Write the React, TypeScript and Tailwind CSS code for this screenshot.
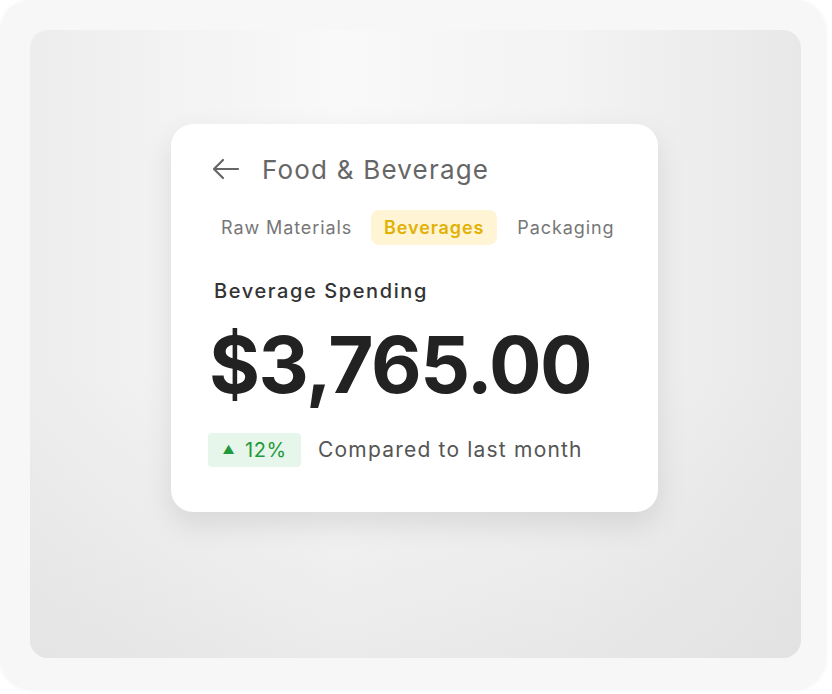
import React from "react";

export default function App() {
  return (
    <div className="w-[832px] h-[694px] bg-white" style={{ fontFamily: "Inter, 'Noto Sans', sans-serif" }}>
      <div className="w-[826px] h-[690px] rounded-[32px] bg-[#f7f7f7] shadow-[0_0_4px_rgba(0,0,0,0.06)] pt-[30px] pl-[30px]">
        <div className="w-[771px] h-[628px] rounded-[18px] bg-[linear-gradient(90deg,#ededed_0%,#f9f9f9_40%,#f3f3f3_70%,#e8e8e8_100%)] flex flex-col items-start pt-[94px] pl-[141px] relative overflow-hidden">
          <div className="absolute inset-0 bg-[linear-gradient(180deg,rgba(255,255,255,0)_55%,rgba(220,220,220,0.5)_100%)]" />
          <div className="relative w-[487px] h-[388px] rounded-[22px] bg-white shadow-[0_12px_30px_rgba(0,0,0,0.10)] pl-[40px] pt-[30px]">
            <div className="flex items-center h-[30px]">
              <svg width="28" height="22" viewBox="0 0 28 22" fill="none" stroke="#666" strokeWidth="2.2" strokeLinecap="round" strokeLinejoin="round" className="ml-[1px]">
                <path d="M26 11H3" />
                <path d="M11 2L2 11l9 9" />
              </svg>
              <span className="ml-[22px] text-[26px] text-[#666] tracking-[1.2px]">Food &amp; Beverage</span>
            </div>
            <div className="flex items-center mt-[26px] text-[18px] text-[#777] tracking-[0.9px]">
              <span className="ml-[10px]">Raw Materials</span>
              <span className="ml-[19px] h-[35px] px-[13px] rounded-[8px] bg-[#fff5d4] text-[#e3b106] font-semibold flex items-center">Beverages</span>
              <span className="ml-[20px]">Packaging</span>
            </div>
            <div className="mt-[31px] ml-[3px] text-[20px] font-medium text-[#333] tracking-[1.6px]">Beverage Spending</div>
            <div className="mt-[14px] -ml-[2px] text-[78px] leading-[90px] font-bold text-[#222] tracking-[-1.5px]">$3,765.00</div>
            <div className="flex items-center mt-[23px] -ml-[3px]">
              <div className="h-[34px] w-[93px] rounded-[4px] bg-[#e7f6ea] flex items-center justify-center text-[#23993b] text-[20px] tracking-[0.5px]">
                <span className="text-[12px] mr-[10px]">▲</span>12%
              </div>
              <span className="ml-[17px] text-[21px] text-[#555] tracking-[1.2px]">Compared to last month</span>
            </div>
          </div>
        </div>
      </div>
    </div>
  );
}
